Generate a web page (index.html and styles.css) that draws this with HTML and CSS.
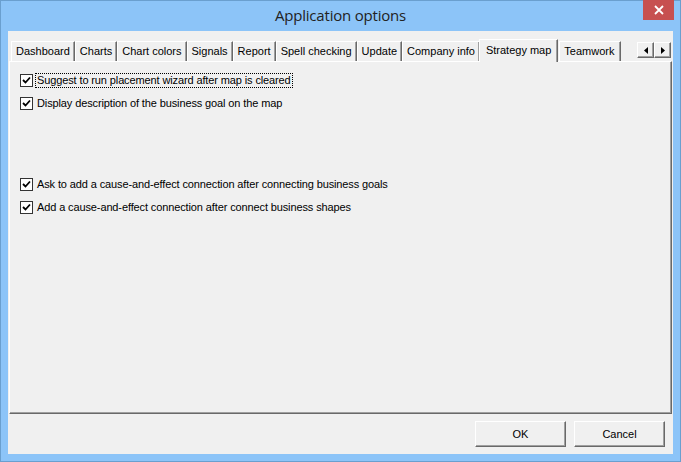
FILE: index.html
```html
<!DOCTYPE html>
<html>
<head>
<meta charset="utf-8">
<link rel="stylesheet" href="styles.css">
</head>
<body>
<div class="window">
  <div class="titlebar">
    <div></div>
    <div class="title">Application options</div>
    <div class="close"><svg width="10" height="10" viewBox="0 0 10 10"><path d="M1 1 L9 9 M9 1 L1 9" stroke="#fff" stroke-width="1.8"/></svg></div>
  </div>
  <div class="client">
    <div class="tabrow">
      <div class="tabs">
        <div class="tab">Dashboard</div>
        <div class="tab">Charts</div>
        <div class="tab">Chart colors</div>
        <div class="tab">Signals</div>
        <div class="tab">Report</div>
        <div class="tab">Spell checking</div>
        <div class="tab">Update</div>
        <div class="tab">Company info</div>
        <div class="tab active">Strategy map</div>
        <div class="tab">Teamwork</div>
      </div>
      <div class="arrows">
        <div class="arrow"><svg width="4" height="7" viewBox="0 0 4 7"><path d="M4 0 L0 3.5 L4 7 Z" fill="#000"/></svg></div>
        <div class="arrow"><svg width="4" height="7" viewBox="0 0 4 7"><path d="M0 0 L4 3.5 L0 7 Z" fill="#000"/></svg></div>
      </div>
    </div>
    <div class="panel">
      <div class="group">
        <label class="opt"><span class="cb"><svg width="9" height="9" viewBox="0 0 9 9"><path d="M1 4 L3.5 6.5 L8 1.5" fill="none" stroke="#000" stroke-width="1.8"/></svg></span><span class="lbl focus">Suggest to run placement wizard after map is cleared</span></label>
        <label class="opt"><span class="cb"><svg width="9" height="9" viewBox="0 0 9 9"><path d="M1 4 L3.5 6.5 L8 1.5" fill="none" stroke="#000" stroke-width="1.8"/></svg></span><span class="lbl">Display description of the business goal on the map</span></label>
      </div>
      <div class="group second">
        <label class="opt"><span class="cb"><svg width="9" height="9" viewBox="0 0 9 9"><path d="M1 4 L3.5 6.5 L8 1.5" fill="none" stroke="#000" stroke-width="1.8"/></svg></span><span class="lbl">Ask to add a cause-and-effect connection after connecting business goals</span></label>
        <label class="opt"><span class="cb"><svg width="9" height="9" viewBox="0 0 9 9"><path d="M1 4 L3.5 6.5 L8 1.5" fill="none" stroke="#000" stroke-width="1.8"/></svg></span><span class="lbl">Add a cause-and-effect connection after connect business shapes</span></label>
      </div>
    </div>
    <div class="buttons">
      <div class="btn">OK</div>
      <div class="btn">Cancel</div>
    </div>
  </div>
</div>
</body>
</html>
```
FILE: styles.css
```css
* { box-sizing: border-box; }
html, body { margin: 0; padding: 0; background: #8cc4f8; }
body { font-family: "Liberation Sans", Arial, sans-serif; font-size: 11px; color: #000; }
.window {
  width: 681px; height: 462px;
  background: #8cc4f8;
  border: 1px solid #6a9fcf;
  display: flex; flex-direction: column;
}
.titlebar {
  height: 30px;
  display: grid;
  grid-template-columns: 1fr auto 1fr;
  align-items: start;
}
.title {
  font-family: "Open Sans", "Noto Sans", sans-serif;
  font-size: 15px;
  color: #222;
  padding-top: 4px;
  letter-spacing: -0.2px;
}
.close {
  justify-self: end;
  margin-top: -1px;
  margin-right: 6px;
  width: 31px; height: 20px;
  background: #c75050;
  display: flex; align-items: center; justify-content: center;
}
.client {
  margin: 0 7px 7px 7px;
  height: 423px;
  background: #f0f0f0;
  display: flex; flex-direction: column;
}
.tabrow {
  height: 30px;
  display: flex;
  justify-content: space-between;
  align-items: flex-end;
  padding: 0 1px 0 3px;
}
.tabs { display: flex; align-items: flex-end; }
.tab {
  height: 20px;
  padding: 3px 4px 0 4px;
  border-top: 1px solid #fff;
  border-left: 1px solid #fff;
  border-right: 1px solid #696969;
  box-shadow: inset -1px 0 0 #a0a0a0;
  white-space: nowrap;
}
.tab.active {
  height: 23px;
  padding: 4px 6px 0 6px;
  margin-left: -1px;
  margin-right: 1px;
  margin-bottom: -1px;
  background: #f0f0f0;
  position: relative;
  z-index: 1;
}
.tab:last-child { padding-right: 6px; }
.arrows { display: flex; align-self: flex-start; margin-top: 11px; margin-right: 1px; }
.arrow {
  width: 17px; height: 16px;
  border-top: 1px solid #fff;
  border-left: 1px solid #fff;
  border-right: 1px solid #696969;
  border-bottom: 1px solid #696969;
  box-shadow: inset -1px -1px 0 #a0a0a0;
  display: flex; align-items: center; justify-content: center;
}
.panel {
  margin: 0 1px;
  height: 353px;
  border-top: 1px solid #fff;
  border-left: 1px solid #fff;
  border-right: 1px solid #696969;
  border-bottom: 1px solid #696969;
  box-shadow: inset -1px -1px 0 #a0a0a0;
  padding: 12px 0 0 10px;
}
.group { display: flex; flex-direction: column; gap: 10px; }
.group.second { margin-top: 68px; }
.opt { display: flex; align-items: center; height: 13px; }
.cb {
  width: 13px; height: 13px;
  background: #fff;
  border: 1px solid #333;
  display: flex; align-items: center; justify-content: center;
  margin-right: 3px;
}
.lbl { padding: 0 1px; line-height: 13px; letter-spacing: -0.12px; }
.lbl.focus { outline: 1px dotted #000; }
.buttons {
  display: flex; justify-content: flex-end; gap: 8px;
  padding: 7px 8px 0 0;
}
.btn {
  width: 91px; height: 26px;
  border-top: 1px solid #fff;
  border-left: 1px solid #fff;
  border-right: 1px solid #696969;
  border-bottom: 1px solid #696969;
  box-shadow: inset -1px -1px 0 #a0a0a0;
  display: flex; align-items: center; justify-content: center;
  background: #f0f0f0;
}
```
